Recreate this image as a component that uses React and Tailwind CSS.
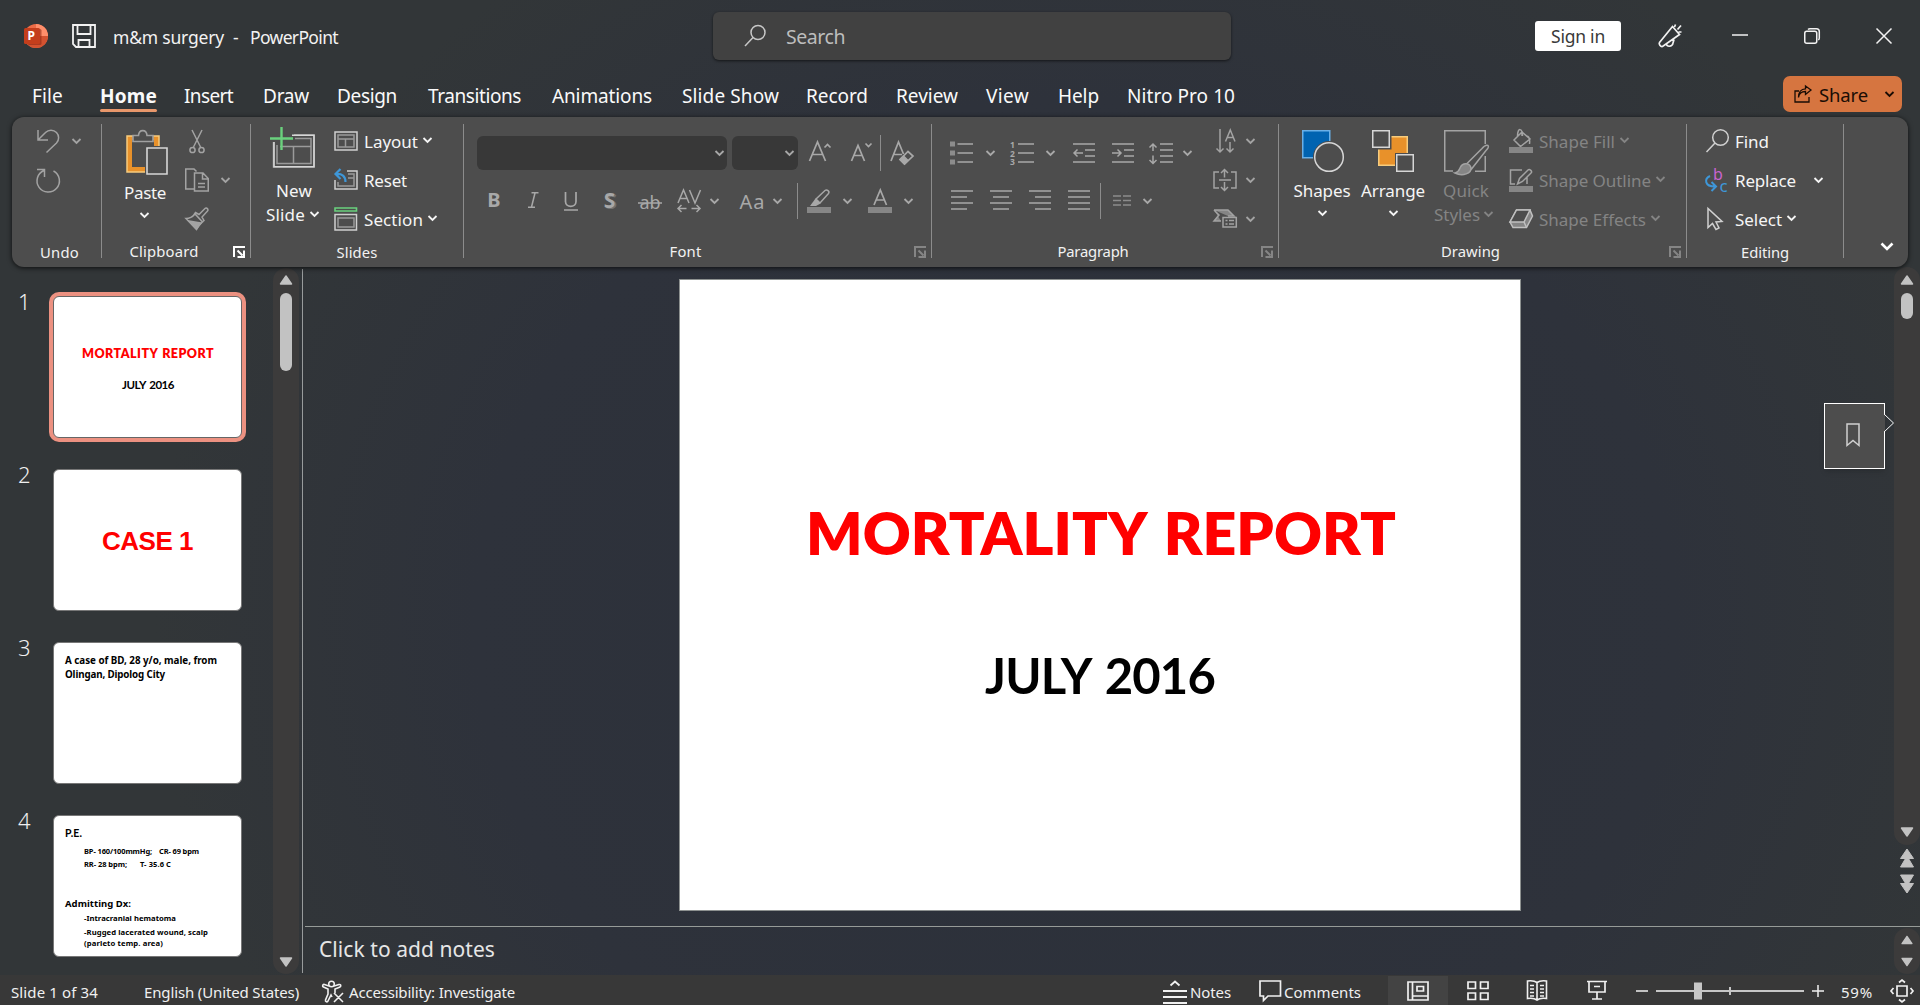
import React, { useLayoutEffect, useRef, useState } from 'react';

// Spreads a single line of text over the width given in className
const Fit = ({ className = '', children }) => {
  const box = useRef(null);
  const line = useRef(null);
  const [spacing, setSpacing] = useState(0);

  useLayoutEffect(() => {
    const text = line.current.textContent;
    const natural = line.current.getBoundingClientRect().width;
    setSpacing((box.current.getBoundingClientRect().width - natural) / text.length);
  }, []);

  return (
    <span ref={box} className={`block shrink-0 whitespace-pre ${className}`}>
      <span ref={line} style={{ letterSpacing: `${spacing}px` }}>{children}</span>
    </span>
  );
};

const Icon = ({ w = 24, h = 24, className = '', children }) => (
  <svg width={w} height={h} viewBox={`0 0 ${w} ${h}`} fill="none" stroke="currentColor" strokeWidth="1.5" className={`shrink-0 overflow-visible ${className}`}>
    {children}
  </svg>
);

const Chevron = ({ className = '' }) => (
  <Icon w={9} h={6} className={className}>
    <path d="M.5 1l4 4 4-4" strokeWidth="1.8" />
  </Icon>
);

const Launcher = ({ className = '' }) => (
  <Icon w={12} h={12} className={className}>
    <path d="M1 11V1h11M4.5 4.5l5 5M11 4.5V11H4.5" strokeWidth="2" />
  </Icon>
);

const Divider = () => <div className="mt-[7px] h-[134px] w-px shrink-0 bg-[#8c8c8c]" />;
const MiniDivider = ({ className }) => <div className={`h-9 w-px shrink-0 bg-[#8c8c8c] ${className}`} />;

const Group = ({ label, className, labelClass, launcher, children }) => (
  <div className={`flex h-[150px] shrink-0 flex-col ${className}`}>
    <div className="flex h-[122px] shrink-0">{children}</div>
    <div className="flex h-[26px] items-center text-[14.8px] leading-[22px] text-[#f2f2f2]">
      <div className="flex flex-1 justify-center pb-[2px]">
        <Fit className={labelClass}>{label}</Fit>
      </div>
      {launcher && <Launcher className={`mr-[5px] ml-[7px] ${launcher}`} />}
    </div>
  </div>
);

// One of the three stacked rows inside a group
const Row = ({ className = '', children }) => (
  <div className={`flex h-[39px] items-center text-[17px] text-[#f5f5f5] [&>span]:pt-[2px] ${className}`}>{children}</div>
);

const tabs = [
  { name: 'File', place: 'ml-[32px] w-[31px]' },
  { name: 'Home', place: 'ml-[37px] w-[57px]', active: true },
  { name: 'Insert', place: 'ml-[27px] w-[49px]' },
  { name: 'Draw', place: 'ml-[30px] w-[46px]' },
  { name: 'Design', place: 'ml-[28px] w-[60px]' },
  { name: 'Transitions', place: 'ml-[31px] w-[93px]' },
  { name: 'Animations', place: 'ml-[31px] w-[100px]' },
  { name: 'Slide Show', place: 'ml-[30px] w-[97px]' },
  { name: 'Record', place: 'ml-[27px] w-[62px]' },
  { name: 'Review', place: 'ml-[28px] w-[62px]' },
  { name: 'View', place: 'ml-[28px] w-[43px]' },
  { name: 'Help', place: 'ml-[29px] w-[41px]' },
  { name: 'Nitro Pro 10', place: 'ml-[28px] w-[108px]' },
];

const TitleBar = () => (
  <div className="flex h-[72px] shrink-0 items-center text-[17.5px] text-[#f2f2f2]">
    <Icon className="ml-6">
      <g stroke="none">
        <circle cx="12" cy="12" r="12" fill="#ed6c47" />
        <path d="M12 0a12 12 0 0 1 12 12H12z" fill="#ff8f6b" />
        <path d="M0 12h24a12 12 0 0 1-24 0z" fill="#d35230" />
        <rect x="4" y="5" width="13.5" height="16" rx="1.5" fill="#8f2b15" opacity=".6" />
        <rect x="0" y="4" width="16" height="16" rx="1.5" fill="#c43e1c" />
        <text x="3.6" y="16" fontSize="12" fontWeight="700" fill="#fff" fontFamily="Noto Sans, sans-serif">P</text>
      </g>
    </Icon>
    <Icon className="ml-6">
      <path d="M1 1h22v22H4l-3-3zM5.500 1v9h13V1M6.500 23v-7h11v7" strokeWidth="1.8" />
    </Icon>
    <Fit className="ml-[17px] w-[111px] pt-[2px]">m&amp;m surgery</Fit>
    <Fit className="ml-[9px] w-[7px] pt-[2px]">-</Fit>
    <Fit className="ml-[10px] w-[88px] pt-[2px]">PowerPoint</Fit>

    <div className="ml-[375px] flex h-12 w-[518px] shrink-0 items-center rounded-md bg-[#414141] shadow-[0_1px_3px_rgba(0,0,0,0.6)]">
      <Icon className="ml-[31px] text-[#c8c8c8]">
        <circle cx="14" cy="8.500" r="7" />
        <path d="M9 13.500L1 22" />
      </Icon>
      <Fit className="ml-[18px] w-[59px] pt-[2px] text-[19.500px] text-[#bdbdbd]">Search</Fit>
    </div>

    <div className="ml-[304px] flex h-[30px] w-[86px] shrink-0 items-center justify-center rounded-[3px] bg-white text-[#3a3a3a]">
      <Fit className="w-[54px] pt-[1px]">Sign in</Fit>
    </div>
    <Icon className="ml-[37px]">
      <path d="M14.500 2.500L1.500 18.500c-1 1.500 1 4.500 3 4l17-12zM8.500 19.500c-.5 4 6 3.500 6.500-.5l1-3.500M16.500 3l1-2.500M19.500 5.500L23 1.500M20.500 8h3" strokeWidth="1.700" />
    </Icon>
    <Icon w={16} h={16} className="ml-[50px]"><path d="M0 7h16" /></Icon>
    <Icon w={16} h={16} className="ml-14">
      <rect x=".75" y="3.250" width="12" height="12" rx="2" />
      <path d="M4 1.500C4.500 1 5 .75 6 .75h6.500a2.800 2.800 0 0 1 2.800 2.800V10c0 1-.3 1.500-1 2" />
    </Icon>
    <Icon w={16} h={16} className="ml-14"><path d="M.5.5l15 15M15.500.5l-15 15" /></Icon>
  </div>
);

const Tabs = () => (
  <div className="flex h-[45px] shrink-0 items-start text-[19px] text-[#fafafa]">
    {tabs.map((tab) => (
      <div key={tab.name} className={`shrink-0 ${tab.place}`}>
        <Fit className={tab.active ? 'h-[37px] w-full pt-2 leading-8 font-bold' : 'w-full pt-2 leading-8'}>{tab.name}</Fit>
        {tab.active && <div className="h-[3px] rounded-full bg-[#e8976b]" />}
      </div>
    ))}
    <div className="mt-1 mr-[18px] ml-auto flex h-9 w-[119px] items-center rounded-[7px] bg-[#d67540] text-[#1a0d05]">
      <Icon w={18} h={18} className="ml-[11px]">
        <path d="M5 6H1v11h14v-5M4.500 12.500c.5-4 3-6 7-6V9.500L17 5l-5.500-4v2.800c-4.500 0-7 3.500-7 8.700z" strokeWidth="1.300" />
      </Icon>
      <Fit className="ml-[7px] w-[49px] pt-[2px] text-[18.500px]">Share</Fit>
      <Chevron className="ml-[17px]" />
    </div>
  </div>
);

const UndoGroup = () => (
  <Group label="Undo" className="w-[89px] pl-[6px]" labelClass="w-[39px] pt-[1px]">
    <div className="pt-[4.5px] pl-[18px]">
      <Row className="!text-[#a3a3a3]">
        <Icon>
          <path d="M2 1v10h10M2 11l7.500-7.500a7.600 7.600 0 0 1 11 0 7.600 7.600 0 0 1 0 10.500L10.500 23.500" />
        </Icon>
        <Chevron className="ml-3" />
      </Row>
      <Row className="!text-[#a3a3a3]">
        <Icon>
          <path d="M1 1.500h7.500V9M8 2.500A11.200 11.200 0 1 0 17.500 3" />
        </Icon>
      </Row>
    </div>
  </Group>
);

const ClipboardGroup = () => (
  <Group label="Clipboard" className="w-[148px]" labelClass="w-[69px]" launcher="text-white">
    <div className="ml-[13px] flex w-[60px] flex-col items-center pt-3 text-[17px] text-[#f5f5f5]">
      <Icon w={42} h={46} className="ml-[4px]">
        <path d="M1 7h32v36H1z" fill="#e8912a" stroke="#f7cc7d" strokeWidth="1.500" />
        <path d="M6 11h22v27H6z" fill="#4d4d4d" stroke="none" />
        <path d="M19 17h23v29H19z" fill="#4d4d4d" stroke="none" />
        <path d="M7 12.500V6.500h5.500c.5-6.500 8-6.500 8.500 0H27v6z" fill="#4d4d4d" stroke="#a0a0a0" strokeWidth="1.600" />
        <path d="M21 19h20v26H21z" fill="#4d4d4d" stroke="#d6d6d6" strokeWidth="1.600" />
      </Icon>
      <Fit className="mt-[6px] w-[42px] leading-6">Paste</Fit>
      <Chevron className="mt-[7px] mr-px" />
    </div>
    <div className="ml-[10px] pt-[4.5px]">
      <Row className="!text-[#a3a3a3]">
        <Icon>
          <path d="M7 1l8.500 17M17 1L8.500 18" />
          <circle cx="7.500" cy="21" r="2.600" />
          <circle cx="16.500" cy="21" r="2.600" />
        </Icon>
      </Row>
      <Row className="!text-[#a3a3a3]">
        <Icon>
          <path d="M9 21H.75V1H9l2.500 2.500M9.500 5h8.500l5.250 5.500V23H9.500zM17.500 5v6h5.500M13 15.500h7M13 19h7" />
        </Icon>
        <Chevron className="ml-3" />
      </Row>
      <Row className="!text-[#a3a3a3]">
        <Icon>
          <path d="M1 11.500c4 0 6.500-1.500 9-4.500l7.500 8c-2.500 2-4.500 4.500-6 7.500zM8.500 8.500l2-3 3.500 2L20 1.500c1.500-1.500 4 1 2.500 2.500L17 10l2 3.500-2.500 2" />
          <path d="M4 14l12 2-4.500 6z" fill="currentColor" />
        </Icon>
      </Row>
    </div>
  </Group>
);

const SlidesGroup = () => (
  <Group label="Slides" className="w-[212px]" labelClass="w-[41px] pt-[1px]">
    <div className="ml-[13px] w-[64px] pt-[10px] text-[17px] text-[#f5f5f5]">
      <Icon w={46} h={42} className="ml-[6px]">
        <path d="M24 8h20v32H3.500V15M7 18v18.500h34V11.500H25M10 19.500h31M23.500 20v16" stroke="#9a9a9a" />
        <path d="M22 8.200h22v31.500H4V15" stroke="#d6d6d6" strokeWidth="1.600" />
        <path d="M0 11.500h23M11.500 0v23" stroke="#6ad17d" strokeWidth="2.400" />
      </Icon>
      <Fit className="mt-[10px] ml-[12px] w-[36px] leading-6">New</Fit>
      <div className="flex items-center">
        <Fit className="ml-[2px] w-[39px] leading-6">Slide</Fit>
        <Chevron className="ml-[5px] mb-[2px]" />
      </div>
    </div>
    <div className="ml-[6px] pt-[4.5px]">
      <Row>
        <Icon>
          <path d="M1 3h22v18H1z" stroke="#d0d0d0" />
          <path d="M4 6h16v12H4zM4 10h16M11.500 10v8" stroke="#9a9a9a" />
        </Icon>
        <Fit className="ml-[6px] w-[54px]">Layout</Fit>
        <Chevron className="mb-[2px] ml-[5px]" />
      </Row>
      <Row>
        <Icon>
          <path d="M13 3h10v18H1V12" stroke="#d0d0d0" />
          <path d="M14 6h6v12H4v-4M14 10h6" stroke="#9a9a9a" />
          <path d="M6.500 1L1.500 6l5 5M2 6c6-.5 9.500 2 9.500 8" stroke="#3e97d8" strokeWidth="2.200" />
        </Icon>
        <Fit className="ml-[6px] w-[43px]">Reset</Fit>
      </Row>
      <Row>
        <Icon>
          <path d="M1 1h21.500v3H1z" stroke="#6ad17d" strokeWidth="1.600" />
          <path d="M1 7.500h21.500V23H1z" stroke="#d0d0d0" />
          <path d="M4 11h16v9H4z" stroke="#9a9a9a" />
        </Icon>
        <Fit className="ml-[6px] w-[59px]">Section</Fit>
        <Chevron className="mb-[2px] ml-[5px]" />
      </Row>
    </div>
  </Group>
);

const Glyph = ({ x, y = 18, size = 20, children, ...rest }) => (
  <text x={x} y={y} fontSize={size} textAnchor="middle" fill="currentColor" stroke="none" fontFamily="Noto Sans, sans-serif" {...rest}>
    {children}
  </text>
);

const FontGroup = () => (
  <Group label="Font" className="w-[467px]" labelClass="w-[32px]" launcher="text-[#858585]">
    <div className="pt-[18px] text-[#a8a8a8]">
      <div className="flex h-9 items-center">
        <div className="ml-[13px] flex h-[34px] w-[250px] items-center justify-end rounded-md bg-[#383838] pr-[3px]"><Chevron /></div>
        <div className="ml-[5px] flex h-[34px] w-[66px] items-center justify-end rounded-md bg-[#383838] pr-[4px]"><Chevron /></div>
        <Icon className="ml-[10px]">
          <path d="M1.500 20L9.500 1 17.500 20M4 13.500h11M16.500 6.500l3-3 3 3" strokeWidth="1.700" />
        </Icon>
        <Icon className="ml-[18px]">
          <path d="M1.500 20L8 4.500 14.500 20M4 14.500h8M15.500 2.500l3 3 3-3" strokeWidth="1.700" />
        </Icon>
        <MiniDivider className="ml-[6px]" />
        <Icon className="ml-[9px]">
          <path d="M1 20L8.500 1l5 12M4 13.500h8M10 18.500l8-8 5 4.500-8.500 8z" strokeWidth="1.700" />
          <path d="M10 18.500l3.500-3.500 4.500 4.500-3.500 3.500z" fill="currentColor" />
        </Icon>
      </div>
      <div className="mt-3 flex h-9 items-center">
        <Icon className="ml-[18px]"><Glyph x={12} y={18} fontWeight="700">B</Glyph></Icon>
        <Icon className="ml-[15px]">
          <path d="M10.500 3.800h7M7 18.200h7M14 4l-3.500 14" />
        </Icon>
        <Icon className="ml-[14px]">
          <path d="M6.500 3v9.500c0 6.500 10.500 6.500 10.500 0V3M5 21h14" strokeWidth="1.700" />
        </Icon>
        <Icon className="ml-[15px]">
          <Glyph x={13} y={20} size={22} fontWeight="700" opacity=".4">S</Glyph>
          <Glyph x={11.500} y={18.500} size={21} fontWeight="700">S</Glyph>
        </Icon>
        <Icon className="ml-[16px]">
          <Glyph x={12} y={20} size={18}>ab</Glyph>
          <path d="M0 14h24" />
        </Icon>
        <Icon className="ml-[15px]">
          <path d="M1 14L6.500 1 12 14M3 9.500h7M12.500 1L18 14 23.500 1M1 19.500h8.500M4.500 16L1 19.500 4.500 23M14.500 19.500H23M19.500 16l3.500 3.500-3.500 3.500" />
        </Icon>
        <Chevron className="ml-[9px]" />
        <Icon w={26} className="ml-[20px]"><Glyph x={13} y={20} size={20} textLength="25">Aa</Glyph></Icon>
        <Chevron className="ml-[8px]" />
        <MiniDivider className="ml-[15px]" />
        <Icon className="ml-[9px]">
          <path d="M9 10L18 1.500c2-1.500 5 1 3.500 3L13 14z" />
          <path d="M8.500 9.500l5 5L9 17H3z" fill="currentColor" stroke="none" />
          <path d="M0 18h24v6H0z" fill="#868686" stroke="none" />
        </Icon>
        <Chevron className="ml-[12px]" />
        <Icon className="ml-[16px]">
          <path d="M6 16L12.300 1l6.200 15M8.500 11h8" strokeWidth="1.700" />
          <path d="M0 18h24v6H0z" fill="#868686" stroke="none" />
        </Icon>
        <Chevron className="ml-[12px]" />
      </div>
    </div>
  </Group>
);

const ParagraphGroup = () => (
  <Group label="Paragraph" className="w-[346px]" labelClass="w-[71px]" launcher="text-[#858585]">
    <div className="w-[281px] pt-[18px] text-[#a8a8a8]">
      <div className="flex h-9 items-center">
        <Icon className="ml-[18px]">
          <path d="M0 .5h5v5H0zM0 9.500h5v5H0zM0 18.500h5v5H0z" fill="#8c8c8c" stroke="none" />
          <path d="M7.500 3H23M7.500 12H23M7.500 21H23" strokeWidth="1.700" />
        </Icon>
        <Chevron className="ml-3" />
        <Icon className="ml-[15px]">
          <Glyph x={2.500} y={6.500} size={8.500} fontWeight="700">1</Glyph>
          <Glyph x={2.500} y={15.500} size={8.500} fontWeight="700">2</Glyph>
          <Glyph x={2.500} y={24} size={8.500} fontWeight="700">3</Glyph>
          <path d="M8 3h16M8 12h16M8 21h16" strokeWidth="1.700" />
        </Icon>
        <Chevron className="ml-3" />
        <Icon className="ml-[17px]">
          <path d="M1 3h22M13 9h10M13 15h10M1 21h22M2 12h9M5.500 8.500L2 12l3.500 3.500" />
        </Icon>
        <Icon className="ml-[15px]">
          <path d="M1 3h22M13 9h10M13 15h10M1 21h22M1 12h9M6.500 8.500L10 12l-3.500 3.500" />
        </Icon>
        <Icon className="ml-[14px]">
          <path d="M11 3h13M11 9h13M11 15h13M11 21h13M4 3v7M.5 6.500L4 3l3.500 3.500M4 14.500v8M.5 19L4 22.500 7.500 19" />
        </Icon>
        <Chevron className="ml-[10px]" />
      </div>
      <div className="mt-3 flex h-9 items-center">
        <Icon className="ml-[18px]"><path d="M1 2h22M1 8h16M1 14h22M1 20h16" strokeWidth="1.700" /></Icon>
        <Icon className="ml-[15px]"><path d="M1 2h22M4 8h16M1 14h22M4 20h16" strokeWidth="1.700" /></Icon>
        <Icon className="ml-[15px]"><path d="M1 2h22M7 8h16M1 14h22M7 20h16" strokeWidth="1.700" /></Icon>
        <Icon className="ml-[15px]"><path d="M1 2h22M1 8h22M1 14h22M1 20h22" strokeWidth="1.700" /></Icon>
        <MiniDivider className="ml-[9px]" />
        <Icon className="ml-[9px]"><path d="M3 7h8M3 11.500h8M3 16h8M13 7h8M13 11.500h8M13 16h8" stroke="#8c8c8c" /></Icon>
        <Chevron className="ml-[9px]" />
      </div>
    </div>
    <div className="pt-[4.5px]">
      <Row className="!text-[#a3a3a3]">
        <Icon>
          <path d="M7 0v23M3.500 19.500L7 23l3.500-3.500M17 13v10M13.500 19.500L17 23l3.500-3.500M12.500 12.500L17.300 1 22 12.500M14 8.500h6.500" />
        </Icon>
        <Chevron className="ml-[9px]" />
      </Row>
      <Row className="!text-[#a3a3a3]">
        <Icon>
          <path d="M6 4H1v16h5M18 4h5v16h-5M6 12h12M11.500 9.500V1.500M8 5l3.500-3.500L15 5M11.500 14v8.500M8 19l3.500 3.500L15 19" />
        </Icon>
        <Chevron className="ml-[9px]" />
      </Row>
      <Row className="!text-[#a3a3a3]">
        <Icon>
          <path d="M1 3h14l6 6h-6M1 3l5 5-5 6h7" fill="#858585" />
          <path d="M10 10.500h13.300V20H10zM12.500 13.500h2M16 13.500h5M12.500 17h2M16 17h5" fill="#4d4d4d" />
        </Icon>
        <Chevron className="ml-[9px]" />
      </Row>
    </div>
  </Group>
);

const DrawingGroup = () => (
  <Group label="Drawing" className="w-[407px]" labelClass="w-[59px]" launcher="text-[#858585]">
    <div className="ml-[9px] flex w-[68px] flex-col items-center pt-[13px] text-[17px] text-[#f5f5f5]">
      <Icon w={42} h={42} className="ml-px">
        <path d="M.75.75h27v27h-27z" fill="#0063b1" stroke="#69b0e8" />
        <circle cx="27" cy="27" r="16" fill="#4d4d4d" stroke="none" />
        <circle cx="27" cy="27" r="14.300" fill="#4d4d4d" stroke="#d6d6d6" />
      </Icon>
      <Fit className="mt-[7px] w-[57px] leading-6">Shapes</Fit>
      <Chevron className="mt-[7px]" />
    </div>
    <div className="ml-[2px] flex w-[70px] flex-col items-center pt-[13px] text-[17px] text-[#f5f5f5]">
      <Icon w={42} h={42}>
        <path d="M6.750 6.750h28.500v28.500H6.750z" fill="#e8912a" stroke="#f7cc7d" />
        <path d="M0 0h19.500v19.500H0zM23 23h19v19H23z" fill="#4d4d4d" stroke="none" />
        <path d="M.75.75h16.500v16.500H.75zM24.750 24.750h16.500v16.500h-16.500z" fill="#4d4d4d" stroke="#d6d6d6" />
      </Icon>
      <Fit className="mt-[7px] w-[64px] leading-6">Arrange</Fit>
      <Chevron className="mt-[7px]" />
    </div>
    <div className="ml-[5px] w-[62px] pt-[13px] text-[17px] text-[#848484]">
      <Icon w={46} h={46} className="ml-[11px]">
        <path d="M9 41H.75V.75h40.500V14M41.250 26v15.250H31" stroke="#a3a3a3" />
        <path d="M44 15.500c-2-1-4 .5-6 3L22.500 34l5 5L42 20.500c2-2 3-4 2-5z" fill="#4d4d4d" stroke="#a3a3a3" />
        <path d="M11 43c4-.5 4-3 5.500-6 2.500-5 9.500-4 10.500 1 .5 5-8 9-16 5z" fill="#858585" stroke="#a3a3a3" />
      </Icon>
      <Fit className="mt-[3px] ml-[10px] w-[46px] leading-6">Quick</Fit>
      <div className="flex items-center">
        <Fit className="ml-[1px] w-[46px] leading-6">Styles</Fit>
        <Chevron className="ml-[4px] mb-[2px]" />
      </div>
    </div>
    <div className="ml-[14px] pt-[4.5px]">
      <Row className="!text-[#848484]">
        <Icon>
          <path d="M13 2v5M5 11l8-8 8 7-9.500 7.500zM8.500 7c0-9 5-8 5 0M17.500 7c3 .5 3.500 4 3 8" stroke="#a3a3a3" />
          <path d="M0 18h24v6H0z" fill="#868686" stroke="none" />
        </Icon>
        <Fit className="ml-[6px] w-[76px]">Shape Fill</Fit>
        <Chevron className="mb-[2px] ml-[5px]" />
      </Row>
      <Row className="!text-[#848484]">
        <Icon>
          <path d="M13 2H1.500v14H6M18 9v7M8.500 16l2-5.500L19 2c1.500-1.500 5 1.500 3 3l-8.500 8.500z" stroke="#a3a3a3" />
          <path d="M0 18h24v6H0z" fill="#868686" stroke="none" />
        </Icon>
        <Fit className="ml-[6px] w-[112px]">Shape Outline</Fit>
        <Chevron className="mb-[2px] ml-[5px]" />
      </Row>
      <Row className="!text-[#848484]">
        <Icon>
          <path d="M1 15L7.500 3H21l2.500 6-6 11.500H4z" fill="#858585" stroke="#c0c0c0" />
          <path d="M7.500 3H21l-6 12H1z" fill="#4d4d4d" stroke="#c0c0c0" />
          <path d="M15 15l2.500 5.500" stroke="#c0c0c0" />
        </Icon>
        <Fit className="ml-[6px] w-[107px]">Shape Effects</Fit>
        <Chevron className="mb-[2px] ml-[5px]" />
      </Row>
    </div>
  </Group>
);

const EditingGroup = () => (
  <Group label="Editing" className="w-[156px]" labelClass="w-[48px] pt-[1px]">
    <div className="ml-[18px] pt-[4.5px]">
      <Row>
        <Icon className="text-[#d0d0d0]">
          <circle cx="15.500" cy="8.500" r="7.800" />
          <path d="M10 14L1.500 23" />
        </Icon>
        <Fit className="ml-[6px] w-[34px]">Find</Fit>
      </Row>
      <Row>
        <Icon>
          <Glyph x={13} y={12} size={16} style={{ fill: '#c964cf' }}>b</Glyph>
          <Glyph x={18.500} y={24} size={17} style={{ fill: '#3e97d8' }}>c</Glyph>
          <path d="M5 8c-6 3-5.500 10.500 5 10.500M6.500 14l4.500 4.500L6.500 23" stroke="#3e97d8" strokeWidth="2" />
        </Icon>
        <Fit className="ml-[6px] w-[61px]">Replace</Fit>
        <Chevron className="ml-[18px]" />
      </Row>
      <Row>
        <Icon className="text-[#d0d0d0]">
          <path d="M3 1.500v19l4.500-4 3.500 6 3-1.500-3-6 6-.5z" />
        </Icon>
        <Fit className="ml-[6px] w-[47px]">Select</Fit>
        <Chevron className="mb-[2px] ml-[5px]" />
      </Row>
    </div>
  </Group>
);

const Ribbon = () => (
  <div className="z-10 mx-3 flex h-[150px] shrink-0 rounded-xl bg-[#4d4d4d] shadow-[0_1px_5px_rgba(0,0,0,0.75)]">
    <UndoGroup />
    <Divider />
    <ClipboardGroup />
    <Divider />
    <SlidesGroup />
    <Divider />
    <FontGroup />
    <Divider />
    <ParagraphGroup />
    <Divider />
    <DrawingGroup />
    <Divider />
    <EditingGroup />
    <Divider />
    <Icon w={14} h={9} className="mt-[125px] ml-[36px] text-white"><path d="M1.500 1.500L7 7l5.500-5.500" strokeWidth="2.600" /></Icon>
  </div>
);

const Thumb = ({ number, selected, children }) => (
  <div className="mb-[31px] flex h-[142px] items-start">
    <div className="mt-[-11px] w-[53px] shrink-0 pl-[18px] text-[22px] leading-[32px] font-light text-[#f0f0f0]">{number}</div>
    <div className={selected
      ? 'h-[142px] w-[189px] rounded-md border border-[#666] bg-white text-black ring-4 ring-[#ec9181]'
      : 'h-[142px] w-[189px] rounded-md border border-[#777] bg-white text-black'}
    >
      {children}
    </div>
  </div>
);

const ThumbnailPane = () => (
  <div className="flex h-[708px] w-[302px] shrink-0">
    <div className="w-[273px] pt-[29px]">
      <Thumb number="1" selected>
        <Fit className="mt-[49px] ml-[28px] w-[132px] font-['Lato'] text-[12.500px] leading-4 font-extrabold text-[#f00] [word-spacing:1px]">MORTALITY REPORT</Fit>
        <Fit className="mt-[15px] ml-[68px] w-[52px] font-['Lato'] text-[11.500px] leading-4 font-bold [word-spacing:1.5px]">JULY 2016</Fit>
      </Thumb>
      <Thumb number="2">
        <Fit className="mt-[56px] ml-[48px] w-[91px] font-['Liberation_Sans'] text-[26px] leading-[30px] font-bold text-[#f00]">CASE 1</Fit>
      </Thumb>
      <Thumb number="3">
        <Fit className="mt-[11px] ml-[11px] w-[152px] text-[9.800px] leading-[14px] font-bold">A case of BD, 28 y/o, male, from</Fit>
        <Fit className="ml-[11px] w-[100px] text-[9.800px] leading-[14px] font-bold">Olingan, Dipolog City</Fit>
      </Thumb>
      <Thumb number="4">
        <Fit className="mt-[10px] ml-[11px] w-[17px] font-['Lato'] text-[10.500px] leading-[14px] font-bold">P.E.</Fit>
        <div className="mt-[5px] ml-[30px] flex text-[7.500px] leading-[13px] font-bold">
          <Fit className="w-[68px]">BP- 160/100mmHg;</Fit>
          <Fit className="ml-[7px] w-[40px]">CR- 69 bpm</Fit>
        </div>
        <div className="ml-[30px] flex text-[7.500px] leading-[13px] font-bold">
          <Fit className="w-[43px]">RR- 28 bpm;</Fit>
          <Fit className="ml-[13px] w-[31px]">T- 35.6 C</Fit>
        </div>
        <Fit className="mt-[26px] ml-[11px] w-[66px] text-[9.500px] leading-[14px] font-bold">Admitting Dx:</Fit>
        <div className="ml-[30px] text-[7.700px] font-bold">
          <Fit className="w-[92px] leading-[14px]">-Intracranial hematoma</Fit>
          <Fit className="w-[124px] leading-[14px]">-Rugged lacerated wound, scalp</Fit>
          <Fit className="w-[79px] leading-[9px]">(parieto temp. area)</Fit>
        </div>
      </Thumb>
    </div>
    <div className="mt-[1px] flex h-[706px] w-[26px] flex-col items-center rounded-full bg-[#3c3b3b] pt-[7px] pb-[7px]">
      <ScrollArrow />
      <div className="mt-2 h-[78px] w-3 rounded-full bg-[#c2c2c2]" />
      <ScrollArrow down className="mt-auto" />
    </div>
  </div>
);

const ScrollArrow = ({ down, className = '' }) => (
  <Icon w={14} h={10} className={className}>
    <path
      d={down ? 'M1.500 1h11L7 9z' : 'M1.500 9h11L7 1z'}
      fill="#c2c2c2"
      stroke="#c2c2c2"
      strokeLinejoin="round"
    />
  </Icon>
);

const DoubleArrow = ({ down, className = '' }) => (
  <Icon w={16} h={20} className={`${down ? 'rotate-180' : ''} ${className}`}>
    <path d="M8 1l6.500 9.500h-13zM8 8l6.500 11h-13z" fill="#c2c2c2" stroke="#c2c2c2" strokeWidth="1" strokeLinejoin="round" />
  </Icon>
);

const SlideView = () => (
  <div className="relative flex h-[660px] w-full border-b border-[#969b98]">
    <div className="mt-3 ml-[374px] h-[632px] w-[842px] shrink-0 border border-[#8d9190] bg-white">
      <Fit className="mt-[218px] ml-[126px] w-[590px] font-['Lato'] text-[59px] leading-[70px] font-extrabold text-[#f00] [word-spacing:5px]">MORTALITY REPORT</Fit>
      <Fit className="mt-[77px] ml-[305px] w-[230px] font-['Lato'] text-[49px] leading-[60px] font-bold text-black [word-spacing:4px]">JULY 2016</Fit>
    </div>
    <div className="ml-auto flex w-[26px] shrink-0 flex-col items-center">
      <div className="flex h-[578px] w-[26px] flex-col items-center rounded-full bg-[#3c3b3b] pt-2 pb-2">
        <ScrollArrow />
        <div className="mt-2 h-[26px] w-3 rounded-full bg-[#c2c2c2]" />
        <ScrollArrow down className="mt-auto" />
      </div>
      <DoubleArrow className="mt-[3px]" />
      <DoubleArrow down className="mt-[6px]" />
    </div>
    {/* bookmark flyout */}
    <div className="absolute top-[136px] right-[35px] flex h-[66px] w-[61px] items-center justify-center border border-white bg-[#4d4d4d] shadow-md">
      <Icon w={14} h={24} className="mr-[3px] mb-[2px] text-[#d0d0d0]"><path d="M1 1h12v21.500l-6-5-6 5z" /></Icon>
      <Icon w={11} h={20} className="absolute top-[9px] -right-[11px]">
        <path d="M0 1v18" stroke="#4d4d4d" strokeWidth="2" />
        <path d="M0 1L9.500 10 0 19" stroke="#fff" strokeWidth="1" />
      </Icon>
    </div>
  </div>
);

const NotesPane = () => (
  <div className="flex flex-1 justify-between">
    <Fit className="mt-[6px] ml-[14px] w-[176px] text-[21px] leading-8 text-[#e6e6e6]">Click to add notes</Fit>
    <div className="mt-[1px] flex h-[46px] w-[26px] flex-col items-center justify-between rounded-full bg-[#3c3b3b] py-[7px]">
      <ScrollArrow className="scale-90" />
      <ScrollArrow down className="scale-90" />
    </div>
  </div>
);

const StatusBar = () => (
  <div className="flex h-[30px] shrink-0 items-center bg-[#383838] text-[15px] text-[#f0f0f0]">
    <Fit className="ml-[11px] w-[87px] pt-[5px]">Slide 1 of 34</Fit>
    <Fit className="ml-[46px] w-[155px] pt-[5px]">English (United States)</Fit>
    <Icon className="mt-[3px] ml-[22px]">
      <circle cx="10.500" cy="4" r="2.800" />
      <path d="M8 6L3.500 4.500C1.500 4 1 6.500 2.500 7L7 9v5l-2.500 6c-.5 2 2 2.500 2.500 1l3-6 1 2M13 6l5-1.500c2-.5 2.500 2 .5 2.800L14 9v4M13 13l9 9M22 13l-9 9" strokeWidth="1.600" />
    </Icon>
    <Fit className="ml-[4px] w-[166px] pt-[5px]">Accessibility: Investigate</Fit>
    <Icon className="mt-[4px] ml-[648px]"><path d="M7.500 5.500L12 1.500l4.500 4M0 11h24M0 17h24M0 23h24" strokeWidth="1.800" /></Icon>
    <Fit className="ml-[3px] w-[41px] pt-[5px]">Notes</Fit>
    <Icon className="mt-[2px] ml-[28px]"><path d="M1 2h20.500v15H9l-4.500 4.500V17H1z" strokeWidth="1.700" /></Icon>
    <Fit className="ml-[1px] w-[77px] pt-[5px]">Comments</Fit>
    <div className="ml-[27px] flex h-[29px] w-[60px] shrink-0 items-center justify-center self-end bg-[#434343]">
      <Icon><path d="M2 3h20v18H2zM6.500 3v18M6.500 17H22M11 7.500h6.500V12H11z" strokeWidth="1.700" /></Icon>
    </div>
    <Icon className="ml-[18px]"><path d="M2 4h7.500v6.500H2zM14.500 4H22v6.500h-7.500zM2 15h7.500v6.500H2zM14.500 15H22v6.500h-7.500z" strokeWidth="1.700" /></Icon>
    <Icon className="ml-[35px]">
      <path d="M12 4.500c-2-1.500-5-2-9.500-1.500v17.500c4-.5 7.500 0 9.500 1.500 2-1.500 5.500-2 9.500-1.500V3C17 2.500 14 3 12 4.500zM12 4.500V22M5 7.500h4M5 11h4M5 14.500h4M5 18h4M15 7.500h4M15 11h4M15 14.500h4M15 18h4" strokeWidth="1.600" />
    </Icon>
    <Icon className="ml-[36px]"><path d="M2 3.500h20M4 3.500v10.500h16V3.500M9 8.500h6M12 14v6.500M7 21h10" strokeWidth="1.700" /></Icon>
    <Icon w={12} h={12} className="mt-[2px] ml-[27px]"><path d="M0 6h12" /></Icon>
    <Icon w={148} h={18} className="mt-[2px] ml-[8px] text-[#c6c6c6]">
      <path d="M0 9h148M74 5v8" strokeWidth="2" />
      <path d="M38 .5h8v17h-8z" fill="currentColor" stroke="none" />
    </Icon>
    <Icon w={12} h={12} className="mt-[2px] ml-[8px]"><path d="M0 6h12M6 0v12" /></Icon>
    <Fit className="ml-[17px] w-[32px] pt-[5px]">59%</Fit>
    <Icon className="mt-[2px] ml-[17px]">
      <path d="M7 7h10v10H7zM9 3.500L12 1l3 2.500M9 20.500l3 2.500 3-2.500M3.500 9L1 12l2.500 3M20.500 9l2.500 3-2.500 3" strokeWidth="1.700" />
    </Icon>
  </div>
);

const App = () => (
  <div className="flex h-[1005px] w-[1920px] flex-col overflow-hidden bg-[#323638] bg-[radial-gradient(ellipse_48%_80%_at_56%_62%,#2b303a_0%,#2e323b_65%,#323638_100%)] font-['Noto_Sans',sans-serif]">
    <TitleBar />
    <Tabs />
    <Ribbon />
    <div className="flex h-[708px] shrink-0">
      <ThumbnailPane />
      <div className="mt-[2px] h-[704px] w-px bg-[#989b9c]" />
      <div className="ml-[2px] flex flex-1 flex-col">
        <SlideView />
        <NotesPane />
      </div>
    </div>
    <StatusBar />
  </div>
);

export default App;
